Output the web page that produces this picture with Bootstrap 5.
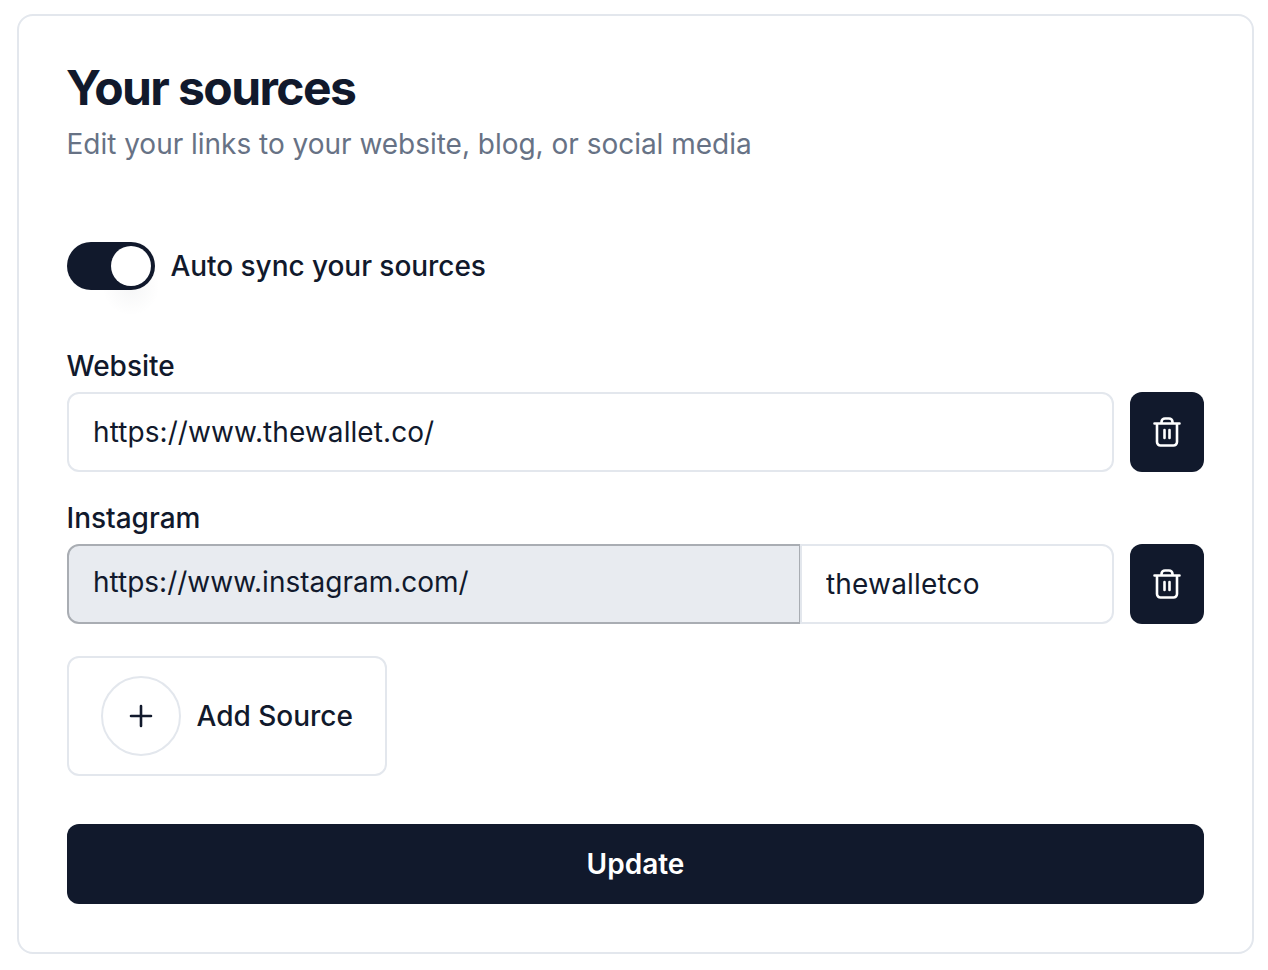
<!DOCTYPE html>
<html><head><meta charset="utf-8">
<link href="https://cdn.jsdelivr.net/npm/bootstrap@5.3.0/dist/css/bootstrap.min.css" rel="stylesheet">
<style>
html,body{background:#fff;height:970px;overflow:hidden}
body{font-family:Inter,sans-serif;color:#11192c;padding:14px 14px 16px 17px}
.src-panel{border:2px solid #e3e7ed;border-radius:16px;height:940px;padding:48px 48px 0 48px;background:#fff}
.src-title{font-family:Inter,sans-serif;font-size:48px;font-weight:700;line-height:48px;letter-spacing:-1.6px;margin:0 0 12px -1px;color:#11192c}
.src-sub{font-size:28px;line-height:40px;letter-spacing:-.02px;color:#677285;margin:0 0 0 -.5px}
.src-switch{position:relative;margin:78px 0 60px;padding:0;min-height:48px;gap:15.5px}
.src-switch::before{content:"";position:absolute;left:35px;top:16px;width:58px;height:58px;border-radius:50%;background:radial-gradient(circle,rgba(17,25,44,.04),rgba(17,25,44,0) 70%)}
.src-switch .form-check-input{position:relative;float:none;margin:0;width:88px;height:48px;background-color:#11192c;border:0;box-shadow:none;
 background-image:url("data:image/svg+xml,%3csvg xmlns='http://www.w3.org/2000/svg' viewBox='-4 -4 8 8'%3e%3ccircle r='3.33' fill='%23fff'/%3e%3c/svg%3e");background-position:right center;}
.src-switch .form-check-label,.src-label{font-size:28px;font-weight:500;line-height:32px;color:#11192c}
.src-switch .form-check-label{letter-spacing:-.05px;position:relative}
.src-label{margin:0 0 10px -.5px;display:block}
.src-input{height:80px;border:2px solid #e3e7ed;border-radius:12px;padding:0 24px;font-size:28px;line-height:32px;letter-spacing:.08px;color:#11192c;box-shadow:none}
.src-row{gap:16px;margin-bottom:30px}
.src-trash{width:74px;height:80px;flex:none;padding:0;background:#11192c;border:0;border-radius:12px}
.src-addon{width:734px;height:80px;background:#e8ebf0;border:2px solid #a9adb3;border-radius:12px 0 0 12px;padding:0 24px 4px;font-size:28px;line-height:32px;color:#11192c}
.input-group .src-value{margin-left:2px;border-radius:0 12px 12px 0;letter-spacing:.18px}
.src-add{width:320px;height:120px;margin-top:32px;padding:0 0 0 32px;background:#fff;border:2px solid #e3e7ed;border-radius:12px;gap:15.5px;font-size:28px;font-weight:500;color:#11192c}
.src-plus{width:80px;height:80px;border:2px solid #e3e7ed;border-radius:50%}
.src-update{height:80px;margin-top:48px;background:#11192c;border:0;border-radius:12px;color:#fff;font-size:28px;font-weight:600}
</style></head><body>
<div class="src-panel">
  <h1 class="src-title">Your sources</h1>
  <p class="src-sub">Edit your links to your website, blog, or social media</p>
  <div class="form-check form-switch d-flex align-items-center src-switch">
    <input class="form-check-input" type="checkbox" role="switch" id="sync" checked>
    <label class="form-check-label" for="sync">Auto sync your sources</label>
  </div>
  <label class="src-label" for="web">Website</label>
  <div class="d-flex src-row">
    <input id="web" class="form-control src-input flex-grow-1" value="https://www.thewallet.co/">
    <button class="btn src-trash d-flex align-items-center justify-content-center" aria-label="Delete">
      <svg width="28" height="30" viewBox="0 0 28 30" fill="none" stroke="#fff" stroke-width="2.6" stroke-linecap="round" stroke-linejoin="round"><path d="M1.5 6.5H26.5M8.5 6.5V5a3.5 3.5 0 0 1 3.5-3.5h4A3.5 3.5 0 0 1 19.5 5v1.5M4 6.5V25a3.5 3.5 0 0 0 3.5 3.5h13A3.5 3.5 0 0 0 24 25V6.5M11.5 13v8M16.5 13v8"/></svg>
    </button>
  </div>
  <label class="src-label" for="ig">Instagram</label>
  <div class="d-flex src-row mb-0">
    <div class="input-group flex-grow-1 w-auto flex-fill">
      <span class="input-group-text src-addon">https://www.instagram.com/</span>
      <input id="ig" class="form-control src-input src-value" value="thewalletco">
    </div>
    <button class="btn src-trash d-flex align-items-center justify-content-center" aria-label="Delete">
      <svg width="28" height="30" viewBox="0 0 28 30" fill="none" stroke="#fff" stroke-width="2.6" stroke-linecap="round" stroke-linejoin="round"><path d="M1.5 6.5H26.5M8.5 6.5V5a3.5 3.5 0 0 1 3.5-3.5h4A3.5 3.5 0 0 1 19.5 5v1.5M4 6.5V25a3.5 3.5 0 0 0 3.5 3.5h13A3.5 3.5 0 0 0 24 25V6.5M11.5 13v8M16.5 13v8"/></svg>
    </button>
  </div>
  <button class="btn d-flex align-items-center src-add">
    <span class="src-plus d-flex align-items-center justify-content-center">
      <svg width="24" height="24" viewBox="0 0 24 24" fill="none" stroke="#11192c" stroke-width="2.6" stroke-linecap="round"><path d="M12 2V22M2 12H22"/></svg>
    </span>
    Add Source
  </button>
  <button class="btn w-100 d-block src-update">Update</button>
</div>
</body></html>
